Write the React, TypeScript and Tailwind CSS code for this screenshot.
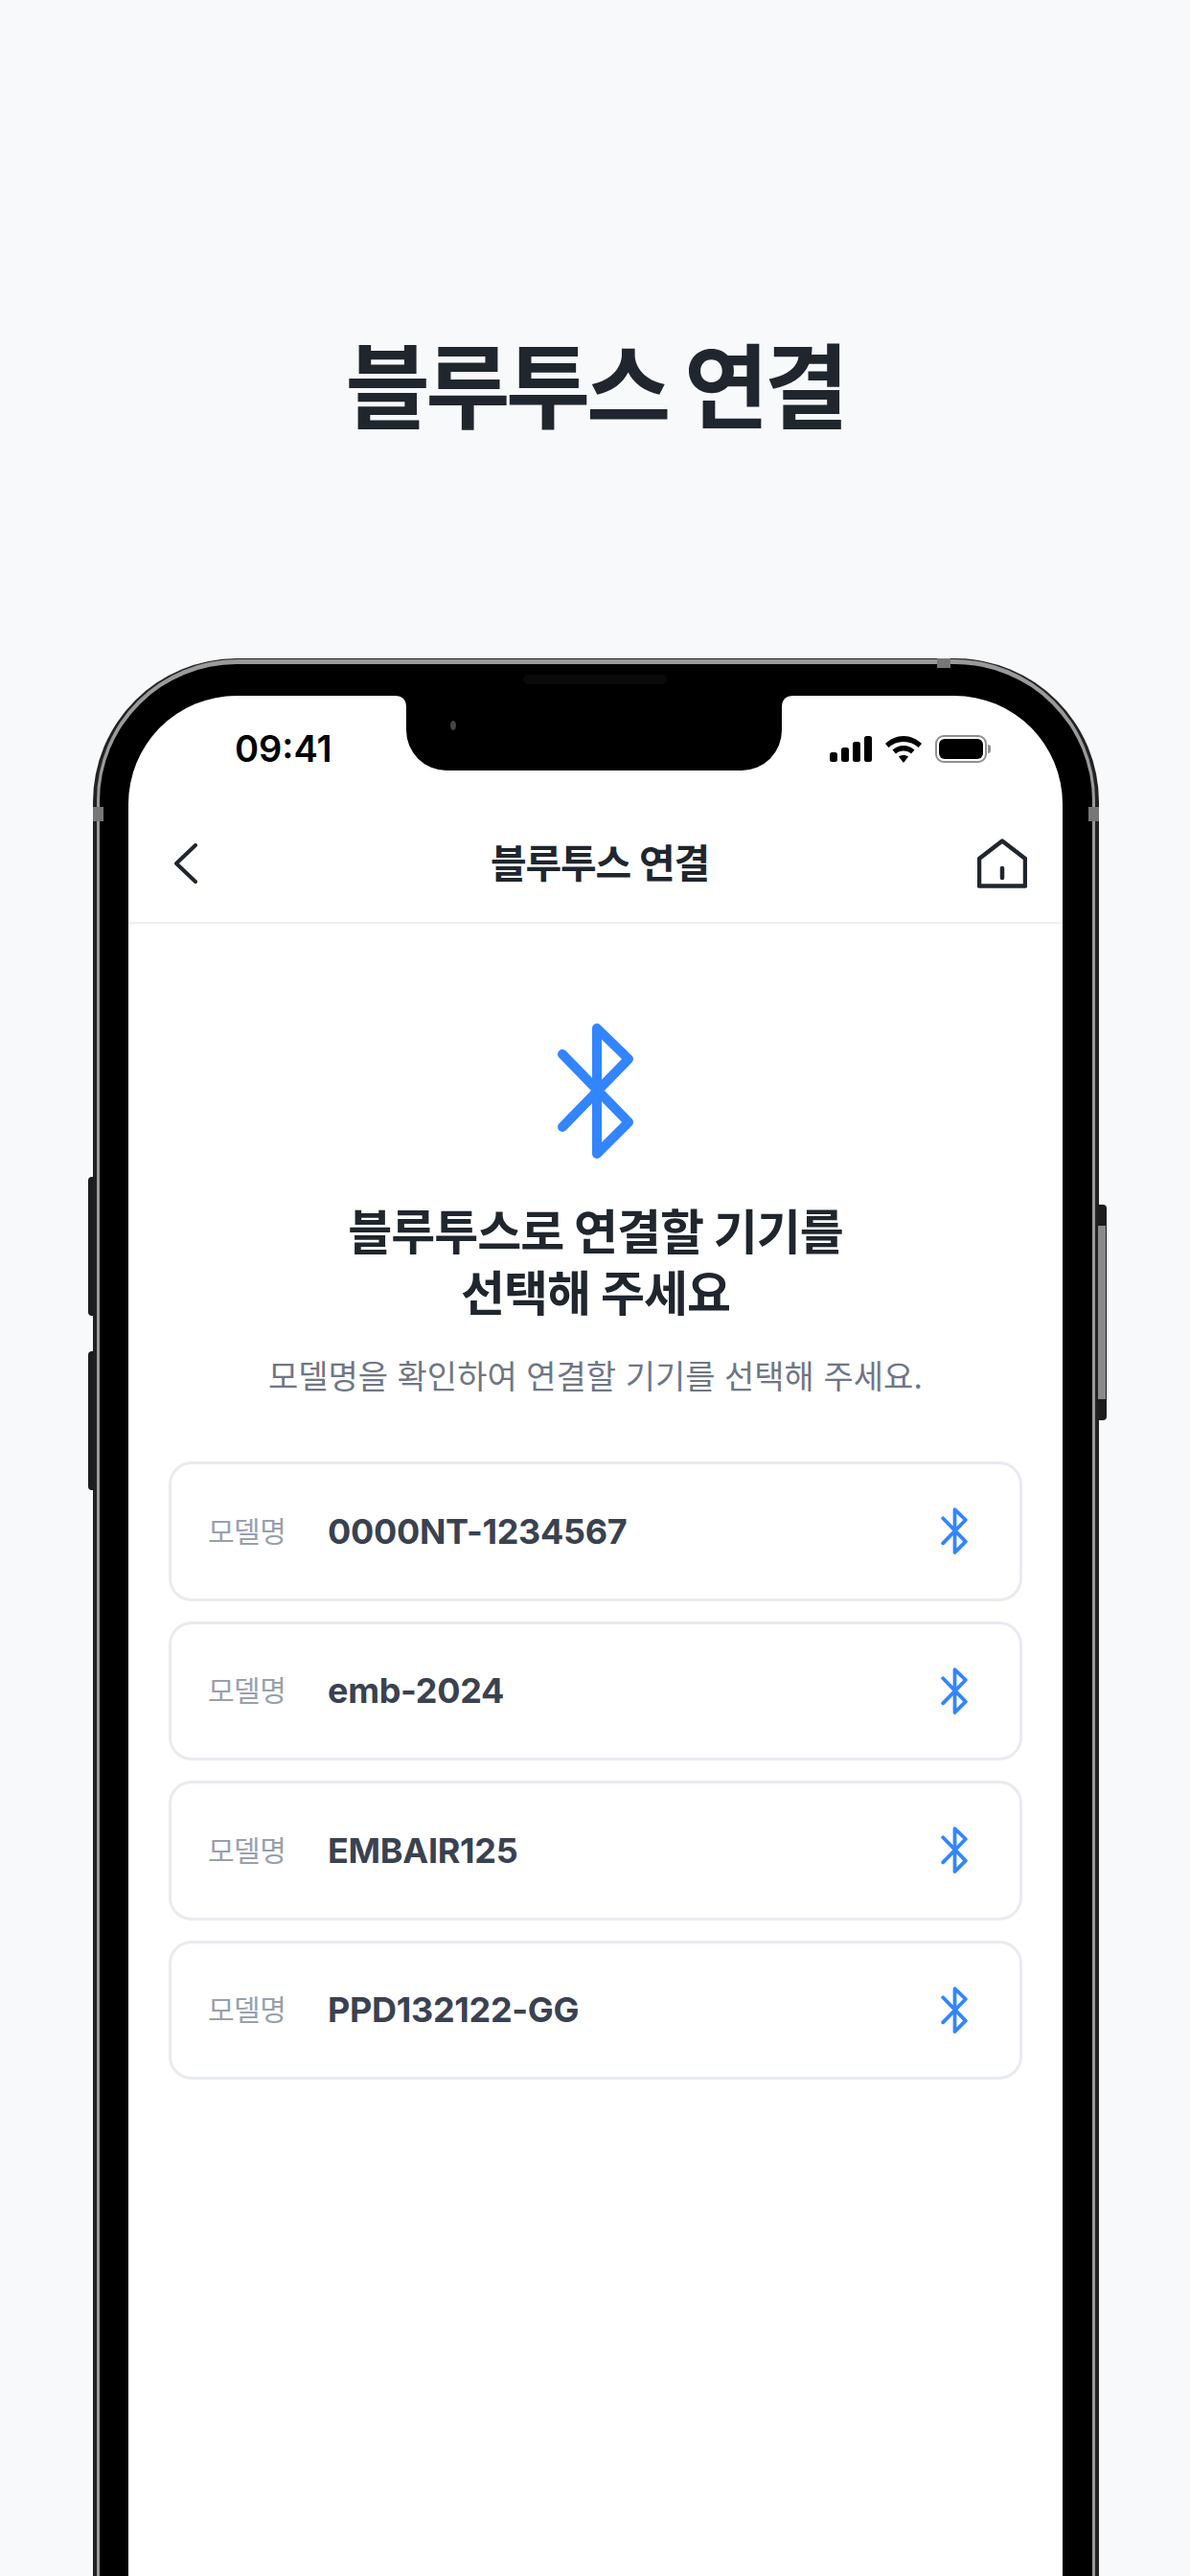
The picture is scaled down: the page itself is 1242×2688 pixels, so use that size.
import React from 'react';

const models = ['0000NT-1234567', 'emb-2024', 'EMBAIR125', 'PPD132122-GG'];

const fontStack = { fontFamily: 'Inter, "Noto Sans CJK KR", sans-serif' };

const BluetoothIcon = ({ className, strokeWidth }: { className: string; strokeWidth: number }) => (
  <svg viewBox="0 0 81 143" className={className} fill="none" stroke="#3385ff" strokeWidth={strokeWidth} strokeLinecap="round" strokeLinejoin="round">
    <path d="M6 33 75 104 42 137V6L75 38 6 109" />
  </svg>
);

const StatusIcons = () => (
  <div className="flex items-center gap-[14px]">
    {/* signal */}
    <svg width="44" height="27" viewBox="0 0 44 27" fill="#000">
      <rect x="0" y="17" width="8" height="10" rx="2.5" />
      <rect x="12" y="12" width="8" height="15" rx="2.5" />
      <rect x="24" y="6" width="8" height="21" rx="2.5" />
      <rect x="36" y="0" width="8" height="27" rx="2.5" />
    </svg>
    {/* wifi */}
    <svg width="38" height="28" viewBox="0 0 38 28" fill="#000">
      <path d="M19 0C26 0 33 3 38 8L34.500 12C30.500 8 25 6 19 6S7.500 8 3.500 12L0 8C5 3 12 0 19 0Z" />
      <path d="M19 10C23.500 10 27.500 12 30.500 14.500L27 18.500C25 16.500 22 15.500 19 15.500S13 16.500 11 18.500L7.500 14.500C10.500 12 14.500 10 19 10Z" />
      <path d="M19 20C21 20 22.500 20.500 24 21.500L19 28 14 21.500C15.500 20.500 17 20 19 20Z" />
    </svg>
    {/* battery */}
    <div className="flex items-center gap-[1px]">
      <div className="w-[54px] h-[29px] rounded-[9px] border-2 border-[#8f8f8f] p-[2px]">
        <div className="w-full h-full rounded-[6px] bg-black" />
      </div>
      <div className="w-[3px] h-[9px] rounded-r-full bg-[#8f8f8f]" />
    </div>
  </div>
);

const App = () => {
  return (
    <div className="relative h-[2688px] overflow-hidden bg-[#f8f9fb]" style={fontStack}>
      <h1 className="h-[687px] pt-[336px] text-center text-[96px] leading-[136px] font-bold tracking-[-4.5px] text-[#20262e]">
        블루투스 연결
      </h1>

      <div className="relative ml-[97px] w-[1050px]">
        {/* side buttons */}
        <div className="absolute left-[-5px] top-[541px] h-[145px] w-[6px] rounded-l-[4px] bg-[#1c1c1c]" />
        <div className="absolute left-[-5px] top-[723px] h-[145px] w-[6px] rounded-l-[4px] bg-[#1c1c1c]" />
        <div className="absolute right-[-8px] top-[570px] h-[225px] w-[9px] rounded-r-[4px] bg-[#1c1c1c] py-[22px] pr-[1px]">
          <div className="h-full w-full bg-[#8a8a8a]" />
        </div>

        <div className="rounded-t-[150px] bg-[#222222] px-[4px] pt-[1px]">
          <div className="rounded-t-[147px] bg-[#9a9a9a] px-[3px] pt-[5px]">
            <div className="relative rounded-t-[143px] bg-black pl-[30px] pr-[31px] pt-[33px]">
              {/* antenna bands */}
              <div className="absolute left-[-7px] top-[149px] h-[15px] w-[11px] bg-[#777777]" />
              <div className="absolute right-[-7px] top-[149px] h-[15px] w-[11px] bg-[#777777]" />
              <div className="absolute right-[148px] top-[-6px] h-[10px] w-[14px] bg-[#777777]" />

              <div className="relative h-[2000px] rounded-t-[113px] bg-white">
                {/* notch */}
                <svg className="absolute left-[278px] top-0" width="416" height="78" viewBox="0 0 416 78" fill="#000">
                  <path d="M0 0H416Q404 0 404 12V36A42 42 0 0 1 362 78H54A42 42 0 0 1 12 36V12Q12 0 0 0Z" />
                  <ellipse cx="61" cy="31" rx="3" ry="5" fill="#444444" />
                </svg>
                <div className="absolute left-[412px] top-[-22px] h-[10px] w-[150px] rounded-full bg-[#0a0a0a]" />

                {/* status bar */}
                <div className="flex h-[114px] items-start justify-between pl-[111px] pr-[75px] pt-[34px]">
                  <span className="text-[38px] leading-[42px] font-semibold text-black">09:41</span>
                  <div className="pt-[7px]">
                    <StatusIcons />
                  </div>
                </div>

                {/* header */}
                <div className="flex h-[124px] items-center justify-between border-b-2 border-[#eeeff1] pl-[48px] pr-[37px]">
                  <div className="w-[50px]">
                    <svg width="24" height="42" viewBox="0 0 24 42" fill="none" stroke="#20262e" strokeWidth="4" strokeLinecap="round" strokeLinejoin="round">
                      <path d="M22 2 2 21 22 40" />
                    </svg>
                  </div>
                  <span className="text-[41px] leading-[56px] font-semibold tracking-[-1.2px] text-[#20262e]">블루투스 연결</span>
                  <svg width="52" height="52" viewBox="0 0 52 52" fill="none" stroke="#20262e" strokeWidth="4.500" strokeLinecap="round" strokeLinejoin="round">
                    <path d="M26 2.500 50 21V49.500H2V21Z" />
                    <path d="M26 31V41" />
                  </svg>
                </div>

                {/* body */}
                <div className="flex flex-col items-center px-[42px] pt-[103px]">
                  <BluetoothIcon className="h-[143px] w-[81px]" strokeWidth={10} />
                  <h2 className="mt-[44px] text-center text-[50px] leading-[64px] font-bold tracking-[-1px] text-[#20262e]">
                    블루투스로 연결할 기기를
                    <br />
                    선택해 주세요
                  </h2>
                  <p className="mt-[31px] text-[34px] leading-[48px] font-normal text-[#6f7685]">
                    모델명을 확인하여 연결할 기기를 선택해 주세요.
                  </p>

                  <div className="mt-[64px] flex w-full flex-col gap-[21px]">
                    {models.map(name => (
                      <div key={name} className="flex h-[145.5px] items-center rounded-[24px] border-[3px] border-[#e8ebf0] pl-[38px] pr-[54px]">
                        <span className="w-[125px] text-[30px] leading-[40px] tracking-[-0.5px] text-[#98a0ae]">모델명</span>
                        <span className="flex-1 text-[36px] leading-[48px] font-bold tracking-[-0.3px] text-[#3a4250]">{name}</span>
                        <BluetoothIcon className="h-[49px] w-[28px]" strokeWidth={11} />
                      </div>
                    ))}
                  </div>
                </div>
              </div>
            </div>
          </div>
        </div>
      </div>
    </div>
  );
};

export default App;
